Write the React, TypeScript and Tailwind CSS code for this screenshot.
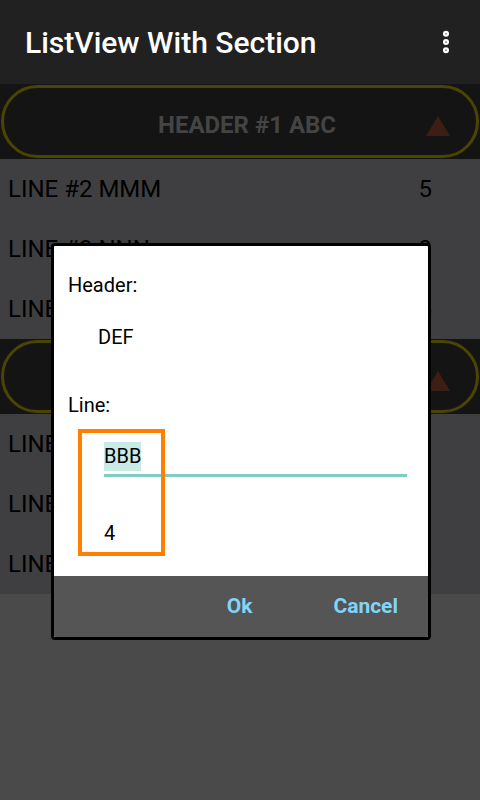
import { EllipsisVertical } from "lucide-react";

type Row = { kind: "header"; title: string } | { kind: "line"; label: string; value: string };

const ROWS: Row[] = [
  { kind: "header", title: "HEADER #1 ABC" },
  { kind: "line", label: "LINE #2 MMM", value: "5" },
  { kind: "line", label: "LINE #3 NNN", value: "3" },
  { kind: "line", label: "LINE #4 OOO", value: "35" },
  { kind: "header", title: "HEADER #2 DEF" },
  { kind: "line", label: "LINE #1 AAA", value: "1" },
  { kind: "line", label: "LINE #2 BBB", value: "3" },
  { kind: "line", label: "LINE #3 CCC", value: "0" },
];

function SectionHeader({ title }: { title: string }) {
  return (
    <div className="h-[75px] bg-[#141414] px-px py-px">
      <div className="relative flex h-full items-center justify-center rounded-full border-[3px] border-[#4a4500] pl-[14px] pt-[6px]">
        <span className="text-[24px] font-bold text-[#444444]">{title}</span>
        {/* collapse arrow */}
        <svg width="24" height="20" viewBox="0 0 24 20" className="absolute right-[26px] top-[28px]">
          <path d="M12 0 L24 20 L0 20 Z" fill="#3e1d12" />
        </svg>
      </div>
    </div>
  );
}

function LineRow({ label, value }: { label: string; value: string }) {
  return (
    <div className="flex h-[60px] items-center justify-between bg-[#3f3f41] pl-2 pr-[48px] text-[24px] text-black">
      <span>{label}</span>
      <span>{value}</span>
    </div>
  );
}

export default function App() {
  return (
    <div
      className="relative h-[800px] w-[480px] overflow-hidden bg-[#4a4a4a]"
      style={{ fontFamily: "Roboto, 'Noto Sans', sans-serif" }}
    >
      <div className="flex h-[84px] items-center justify-between bg-[#212121] pl-[25px] pr-[20px]">
        <h1 className="text-[30px] font-medium text-white">ListView With Section</h1>
        <EllipsisVertical size={28} strokeWidth={3.2} className="text-white" />
      </div>

      <div>
        {ROWS.map((r, i) =>
          r.kind === "header" ? (
            <SectionHeader key={i} title={r.title} />
          ) : (
            <LineRow key={i} label={r.label} value={r.value} />
          )
        )}
      </div>

      {/* edit dialog */}
      <div className="absolute left-[51px] top-[243px] flex w-[380px] flex-col overflow-hidden rounded-[4px] border-[3px] border-black bg-white">
        <div className="flex h-[330px] flex-col pl-[14px] text-[20px] text-black">
          <div className="mt-[26px] h-[26px] leading-[26px]">Header:</div>
          <div className="mt-[26px] h-[26px] pl-[30px] leading-[26px]">DEF</div>
          <div className="mt-[42px] h-[26px] leading-[26px]">Line:</div>
          <div className="ml-[36px] mr-[21px] mt-[23px]">
            <span className="inline-block bg-[#c9ebe8] leading-[29px]">BBB</span>
            <div className="mt-[3px] h-[3px] bg-[#80cbc4]" />
          </div>
          <div className="ml-[36px] mt-[43px] leading-[26px]">4</div>
        </div>
        <div className="flex h-[61px] items-center justify-end gap-[81px] bg-[#555555] pr-[30px] text-[21px] font-bold text-[#81d4fa]">
          <span>Ok</span>
          <span>Cancel</span>
        </div>
      </div>

      {/* highlight annotation */}
      <div className="absolute left-[78px] top-[429px] h-[127px] w-[87px] border-4 border-[#ff8000]" />
    </div>
  );
}
